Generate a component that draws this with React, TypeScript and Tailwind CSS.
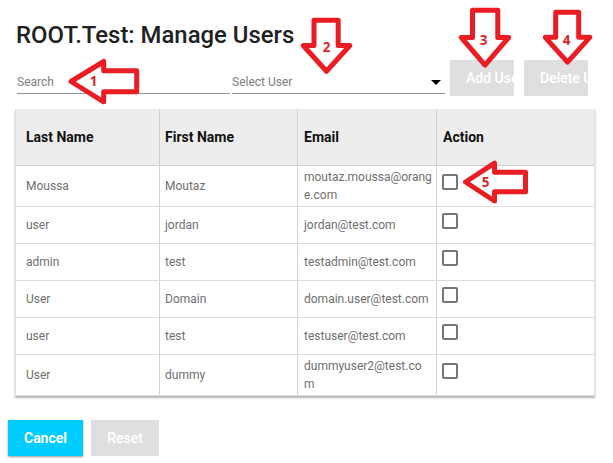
import React from "react";

const users = [
  { last: "Moussa", first: "Moutaz", email: ["moutaz.moussa@orang", "e.com"], tall: true },
  { last: "user", first: "jordan", email: ["jordan@test.com"] },
  { last: "admin", first: "test", email: ["testadmin@test.com"] },
  { last: "User", first: "Domain", email: ["domain.user@test.com"] },
  { last: "user", first: "test", email: ["testuser@test.com"] },
  { last: "User", first: "dummy", email: ["dummyuser2@test.co", "m"], tall: true },
];

const callouts = [
  { n: "1", x: 93.5, y: 86, points: "71,81.5 103.7,61.5 103.7,70.7 136.7,70.7 136.7,91.7 103.7,91.7 103.7,101.8" },
  { n: "2", x: 326.5, y: 52, points: "314,20.3 338.2,20.3 338.2,45.5 349.8,45.5 326.5,71.3 303.2,45.5 314,45.5" },
  { n: "3", x: 483.5, y: 45, points: "472.5,10.3 497.8,10.3 497.8,37.5 508.7,37.5 485,65.2 461.3,37.5 472.5,37.5" },
  { n: "4", x: 566.5, y: 45, points: "555.7,12.3 578.7,12.3 578.7,37.3 589.8,37.3 567.5,62.2 545.2,37.3 555.7,37.3" },
  { n: "5", x: 485.5, y: 186.5, points: "465.5,182 494.5,163.2 494.5,172.3 525.5,172.3 525.5,191.7 494.5,191.7 494.5,201" },
];

function Callouts() {
  return (
    <svg className="pointer-events-none absolute inset-0" width="613" height="463" viewBox="0 0 613 463">
      {callouts.map((c) => (
        <g key={c.n}>
          <polygon points={c.points} fill="#fff" stroke="#ea1c24" strokeWidth="5" strokeLinejoin="round" />
          <text x={c.x} y={c.y} textAnchor="middle" fill="#d9252b" className="font-['Open_Sans',sans-serif] text-[13.5px] font-bold">
            {c.n}
          </text>
        </g>
      ))}
    </svg>
  );
}

export default function App() {
  return (
    <div className="relative h-[463px] w-[613px] overflow-hidden bg-white font-['Roboto',sans-serif] text-[#6f6f6f]">
      <h1 className="ml-4 pt-[19px] text-[23.9px] leading-8 font-medium whitespace-nowrap text-[#212121]">ROOT.Test: Manage Users</h1>

      <div className="mt-[9px] ml-[17px] flex h-9 items-start">
        <div className="mr-[2px] flex h-[34px] w-[213px] items-end border-b border-[#949494] pb-[3px] text-[12px] leading-4 text-[#808080]">Search</div>
        <div className="flex h-[34px] w-[213px] items-end justify-between border-b border-[#949494] pb-[3px] text-[12px] leading-4 text-[#808080]">
          <span>Select User</span>
          <span className="mr-1 mb-[5px] border-x-[5px] border-t-[5px] border-x-transparent border-t-black" />
        </div>
        <button className="ml-[5px] h-9 w-16 overflow-hidden bg-[#dfdfdf] pl-4 text-left text-[14px] font-medium whitespace-nowrap text-white">Add User</button>
        <button className="ml-[10px] h-9 w-16 overflow-hidden bg-[#dfdfdf] pl-4 text-left text-[14px] font-medium whitespace-nowrap text-white">Delete User</button>
      </div>

      <div className="mt-[13px] ml-[15px] w-[580px] border-x border-[#e2e2e2] shadow-[0_2px_2px_rgba(0,0,0,0.3)]">
        <div className="grid h-[57px] grid-cols-[144px_138px_139px_157px] border-b border-[#d0d0d0] bg-[#ededed] text-[14px] font-bold text-[#111]">
          <div className="flex items-center border-r border-[#d0d0d0] pl-[10px]">Last Name</div>
          <div className="flex items-center border-r border-[#d0d0d0] pl-[5px]">First Name</div>
          <div className="flex items-center border-r border-[#d0d0d0] pl-[6px]">Email</div>
          <div className="flex items-center pl-[6px]">Action</div>
        </div>
        {users.map((u, i) => (
          <div
            key={i}
            className={`grid grid-cols-[144px_138px_139px_157px] border-b border-[#dcdcdc] text-[12px] leading-[18px] ${u.tall ? "h-[41px]" : "h-[37px]"}`}
          >
            <div className="flex items-center border-r border-[#d4d4d4] pl-[10px]">{u.last}</div>
            <div className="flex items-center border-r border-[#d4d4d4] pl-[5px]">{u.first}</div>
            <div className="flex flex-col justify-center border-r border-[#d4d4d4] pl-[6px] whitespace-nowrap">
              {u.email.map((line) => (
                <span key={line}>{line}</span>
              ))}
            </div>
            <div className={`pl-[5px] ${u.tall ? "pt-[8px]" : "pt-[6px]"}`}>
              <div className="h-4 w-4 rounded-[2px] border-2 border-[#757575]" />
            </div>
          </div>
        ))}
      </div>

      <div className="mt-6 ml-2 flex gap-2">
        <button className="h-9 w-[75px] bg-[#00ccff] text-[14px] font-bold text-white shadow-[0_1px_2px_rgba(0,0,0,0.4)]">Cancel</button>
        <button className="h-9 w-[68px] bg-[#dfdfdf] text-[14px] font-medium text-white">Reset</button>
      </div>

      <Callouts />
    </div>
  );
}
